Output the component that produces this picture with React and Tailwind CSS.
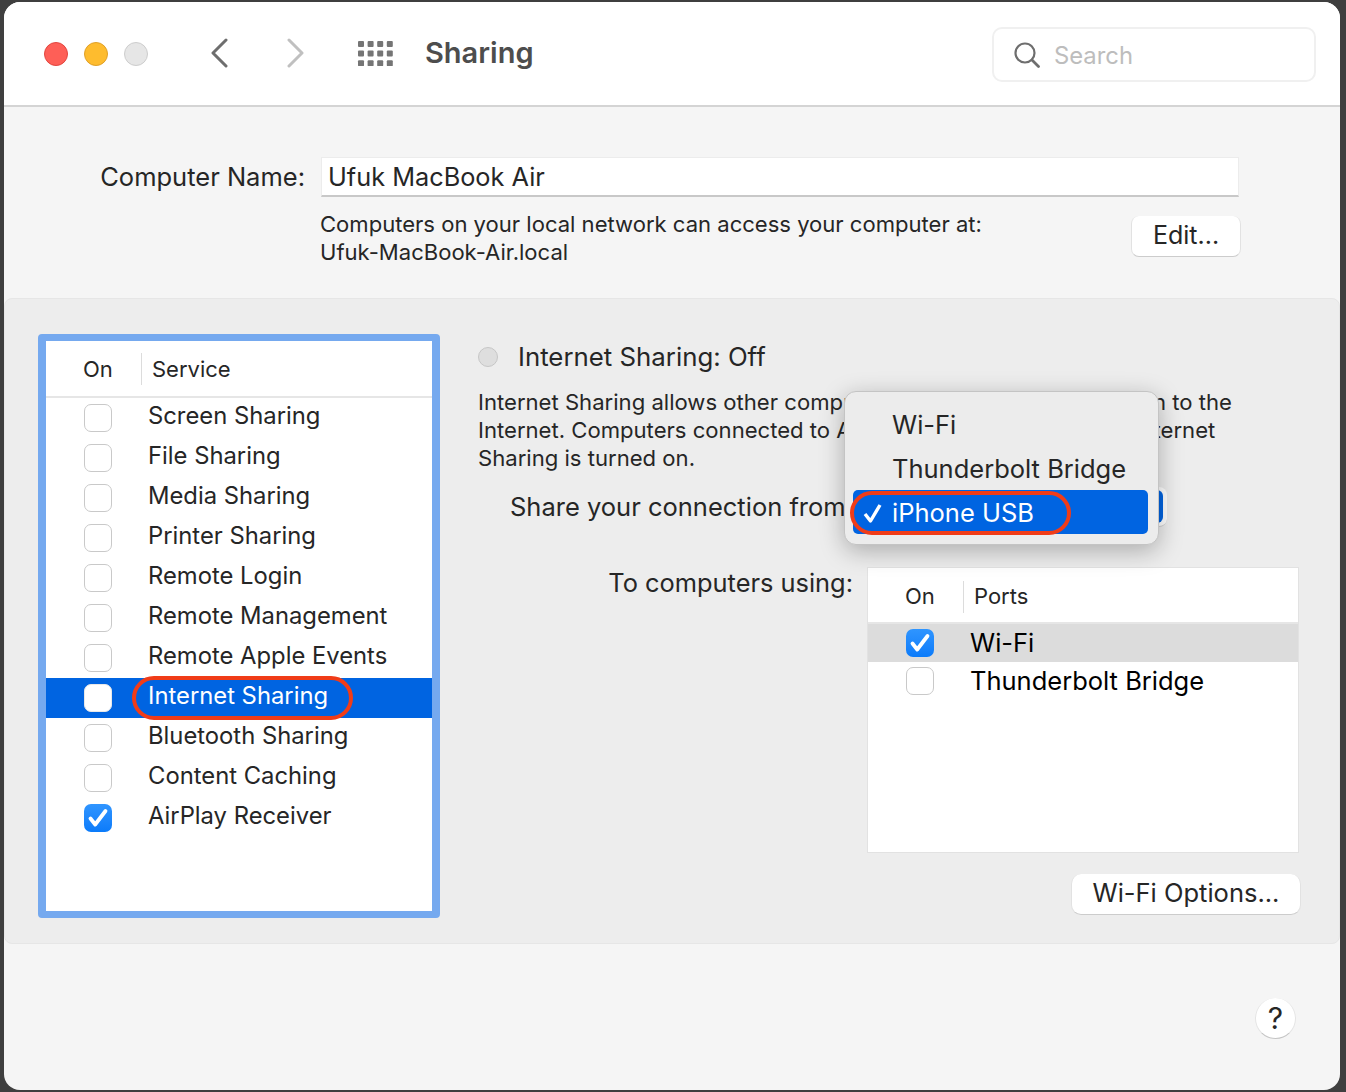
const services = ["Screen Sharing","File Sharing","Media Sharing","Printer Sharing","Remote Login","Remote Management","Remote Apple Events","Internet Sharing","Bluetooth Sharing","Content Caching","AirPlay Receiver"];

function Box({ checked, selected }) {
  if (checked) {
    return (
      <div className="w-[28px] h-[28px] shrink-0 rounded-[7px] bg-gradient-to-b from-[#2f95ff] to-[#0a7bfa]">
        <svg width="28" height="28" viewBox="0 0 28 28" fill="none">
          <path d="M6.5 14.5 L11.2 20.5 L21.5 7" stroke="#fff" strokeWidth="3.8" strokeLinecap="round" strokeLinejoin="round" />
        </svg>
      </div>
    );
  }
  return <div className={"w-[28px] h-[28px] shrink-0 rounded-[7px] bg-white border " + (selected ? "border-[#e8e8e8]" : "border-[#c9c9c9]")} />;
}

export default function App() {
  return (
    <div className="w-[1346px] h-[1092px] bg-[#3f3f3f] pt-[2px] pl-[4px] overflow-hidden font-[Inter,sans-serif] text-[#262626]">
      <div className="relative w-[1336px] h-[1088px] rounded-[16px] overflow-hidden bg-[#f5f5f5] flex flex-col">
        {/* Title bar */}
        <div className="h-[105px] shrink-0 bg-white border-b-2 border-[#d4d4d4] flex items-start">
          <div className="flex gap-[16px] ml-[40px] mt-[40px]">
            <div className="w-[24px] h-[24px] rounded-full bg-[#fe5f57] border border-[#e2463f]" />
            <div className="w-[24px] h-[24px] rounded-full bg-[#febc2e] border border-[#e0a028]" />
            <div className="w-[24px] h-[24px] rounded-full bg-[#e6e6e6] border border-[#cdcdcd]" />
          </div>
          <svg className="ml-[62px] mt-[36px]" width="20" height="30" viewBox="0 0 20 30" fill="none">
            <path d="M16 2 L3 15 L16 28" stroke="#6e6e6e" strokeWidth="3" strokeLinecap="round" strokeLinejoin="round" />
          </svg>
          <svg className="ml-[55px] mt-[36px]" width="20" height="30" viewBox="0 0 20 30" fill="none">
            <path d="M4 2 L17 15 L4 28" stroke="#c0c0c0" strokeWidth="3" strokeLinecap="round" strokeLinejoin="round" />
          </svg>
          <svg className="ml-[52px] mt-[38px]" width="38" height="26" viewBox="0 0 38 26" fill="#757575">
            {[0,1,2].flatMap((r) => [0,1,2,3].map((c) => <rect key={r + "-" + c} x={1 + c * 9.6} y={1 + r * 9.6} width="6" height="6" rx="1" />))}
          </svg>
          <div className="ml-[30px] mt-[31px] text-[29px] leading-[40px] font-semibold text-[#4d4d4d]">Sharing</div>
          <div className="ml-auto mr-[24px] mt-[25px] w-[324px] h-[55px] rounded-[10px] border-2 border-[#f0f0f0] flex items-center pl-[20px]">
            <svg width="26" height="26" viewBox="0 0 26 26" fill="none">
              <circle cx="11" cy="11" r="9.5" stroke="#6e6e6e" strokeWidth="2.2" />
              <path d="M18 18 L24.5 24.5" stroke="#6e6e6e" strokeWidth="2.8" strokeLinecap="round" />
            </svg>
            <span className="ml-[14px] mt-[2px] text-[23.8px] text-[#bdbdbd]">Search</span>
          </div>
        </div>

        {/* Computer name */}
        <div className="h-[191px] shrink-0 flex flex-col">
          <div className="flex items-center mt-[50px]">
            <div className="w-[301px] text-right text-[25.5px] leading-[40px] text-[#262626] whitespace-nowrap">Computer Name:</div>
            <div className="ml-[16px] w-[918px] h-[40px] bg-white border-b-2 border-[#c8c8c8] border-x border-x-[#ececec] border-t border-t-[#ececec] pl-[6px] text-[25.3px] leading-[38px]">Ufuk MacBook Air</div>
          </div>
          <div className="flex items-start">
            <div className="ml-[316px] mt-[13px] text-[22.05px] leading-[28px] whitespace-nowrap">
              <div>Computers on your local network can access your computer at:</div>
              <div>Ufuk-MacBook-Air.local</div>
            </div>
            <div className="ml-auto mr-[99px] mt-[19px] w-[110px] h-[41px] rounded-[8px] bg-white border-b border-b-[#cccccc] border-x border-x-[#e2e2e2] flex items-center justify-center text-[25px]">Edit...</div>
          </div>
        </div>

        {/* Group */}
        <div className="relative h-[646px] shrink-0 rounded-[8px] bg-[#ededed] border border-[#e6e6e6] flex">
          {/* Service list */}
          <div className="relative ml-[33px] mt-[35px] w-[402px] h-[584px] rounded-[4px] border-x-[8px] border-y-[7px] border-[#75a9ef] bg-white">
            <div className="h-[57px] pt-px flex items-center border-b-2 border-[#e6e6e6] text-[22px]">
              <div className="w-[95px] pl-[37px]">On</div>
              <div className="w-px h-[32px] bg-[#dcdcdc]" />
              <div className="pl-[10px]">Service</div>
            </div>
            {services.map((s, i) => (
              <div key={s} className={"h-[40px] flex items-start pl-[38px] " + (i === 7 ? "bg-[#0064e1] text-white" : "")}>
                <div className="mt-[6px]"><Box checked={s === "AirPlay Receiver"} selected={i === 7} /></div>
                <div className="ml-[36px] text-[23.8px] leading-[36px] whitespace-nowrap">{s}</div>
              </div>
            ))}
            <div className="absolute left-[86px] top-[335px] w-[221px] h-[44px] rounded-full border-[4px] border-[#f03c18]" />
          </div>

          {/* Right column */}
          <div className="ml-[38px] mt-[35px] w-[840px] flex flex-col">
            <div className="flex items-center mt-[8px]">
              <div className="w-[20px] h-[20px] rounded-full bg-[#dedede] border border-[#c6c6c6]" />
              <div className="ml-[20px] text-[25.8px] leading-[30px] whitespace-nowrap">Internet Sharing: Off</div>
            </div>
            <div className="mt-[16px] text-[22.1px] leading-[28px] whitespace-nowrap">
              <div>Internet Sharing allows other computers to share your<span className="inline-block w-[4px]" /> connection to the</div>
              <div>Internet. Computers connected to AirPort may not reach the<span className="inline-block w-[25px]" /> Internet</div>
              <div>Sharing is turned on.</div>
            </div>
            <div className="flex items-center mt-[15px] ml-[32px]">
              <div className="text-[25.5px] leading-[40px] whitespace-nowrap">Share your connection from:</div>
              <div className="ml-auto mr-[151px] w-[60px] h-[40px] rounded-[8px] bg-white border-b border-b-[#d0d0d0] flex justify-end p-[3px] pr-[4px]">
                <div className="w-[22px] h-full rounded-[6px] bg-[#0064e1]" />
              </div>
            </div>
            <div className="flex mt-[40px]">
              <div className="w-[375px] text-right text-[25.4px] leading-[32px] whitespace-nowrap">To computers using:</div>
              <div className="ml-[14px] w-[432px] h-[286px] bg-white border border-[#e2e2e2]">
                <div className="h-[56px] pt-[3px] flex items-center border-b-2 border-[#e6e6e6] text-[22px]">
                  <div className="w-[95px] pl-[37px]">On</div>
                  <div className="w-px h-[32px] bg-[#dcdcdc]" />
                  <div className="pl-[10px]">Ports</div>
                </div>
                <div className="h-[38px] bg-[#dcdcdc] flex items-start pl-[38px] text-black">
                  <div className="mt-[5px]"><Box checked /></div>
                  <div className="ml-[36px] text-[25.5px] leading-[38px]">Wi-Fi</div>
                </div>
                <div className="h-[38px] flex items-start pl-[38px] text-black">
                  <div className="mt-[5px]"><Box /></div>
                  <div className="ml-[36px] text-[25.5px] leading-[38px] whitespace-nowrap">Thunderbolt Bridge</div>
                </div>
              </div>
            </div>
            <div className="ml-[593px] mt-[21px] w-[230px] h-[41px] pb-[2px] rounded-[10px] bg-white border-b border-b-[#cccccc] border-x border-x-[#e2e2e2] flex items-center justify-center text-[25.5px] whitespace-nowrap">Wi-Fi Options...</div>
          </div>

          {/* Pop-up menu */}
          <div className="absolute left-[839px] top-[92px] w-[315px] h-[154px] rounded-[12px] bg-[#ececec] border border-[#c4c4c4] shadow-[0_6px_24px_rgba(0,0,0,0.28)] pt-[11px] px-[8px] text-[25.5px] whitespace-nowrap">
            <div className="h-[44px] pl-[39px] leading-[44px]">Wi-Fi</div>
            <div className="h-[43px] pl-[39px] leading-[44px]">Thunderbolt Bridge</div>
            <div className="relative h-[44px] w-[295px] rounded-[5px] bg-[#0064e1] text-white pl-[39px] leading-[46px]">
              iPhone USB
              <svg className="absolute left-[10px] top-[12px]" width="20" height="22" viewBox="0 0 20 22" fill="none">
                <path d="M2 12 L7.5 19 L17 3" stroke="#fff" strokeWidth="3.4" strokeLinejoin="round" />
              </svg>
              <div className="absolute left-[-3px] top-[1px] w-[221px] h-[44px] rounded-full border-[4px] border-[#f03c18]" />
            </div>
          </div>
        </div>

        {/* Footer */}
        <div className="flex-1 flex justify-end items-start">
          <div className="mt-[54px] mr-[44px] w-[41px] h-[41px] rounded-full bg-white border-b border-b-[#c4c4c4] border-x border-x-[#e4e4e4] flex items-center justify-center text-[30px]">?</div>
        </div>
      </div>
    </div>
  );
}
